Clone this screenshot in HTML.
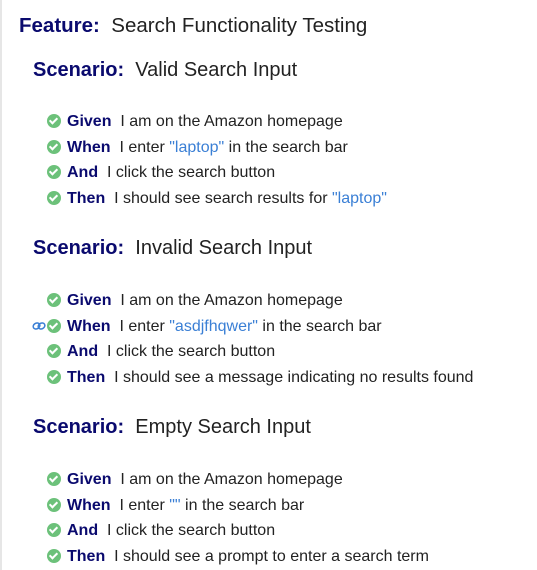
<!DOCTYPE html>
<html><head><meta charset="utf-8"><style>
html,body{margin:0;padding:0;background:#fff;width:537px;height:570px;overflow:hidden;font-family:"Liberation Sans",sans-serif;color:#222;}
.bl{position:absolute;left:0;top:0;width:2px;height:570px;background:#e6e6e6}
.r{position:absolute;white-space:nowrap;line-height:20px}
.f{left:19px;font-size:20.5px;line-height:26px}
.s{left:33px;font-size:20px;line-height:26px}
.k{color:#0a0a6e;font-weight:bold}
.st{left:47px;font-size:16px}
.st .k{margin-left:6px}
.q{color:#3a7fd5}
.ic{display:inline-block;width:14px;height:14px;border-radius:50%;background:#6cc17a;vertical-align:-2px;position:relative}
.ic:after{content:"";position:absolute;left:4px;top:2px;width:3px;height:6px;border:solid #fff;border-width:0 2px 2px 0;transform:rotate(45deg)}
</style></head><body>
<div class="bl"></div>
<div class="r f" style="top:13px"><span class="k">Feature:</span>&nbsp; Search Functionality Testing</div>

<div class="r s" style="top:57px"><span class="k">Scenario:</span>&nbsp; Valid Search Input</div>
<div class="r st" style="top:112px"><span class="ic"></span><span class="k">Given</span>&nbsp; I am on the Amazon homepage</div>
<div class="r st" style="top:138px"><span class="ic"></span><span class="k">When</span>&nbsp; I enter <span class="q">"laptop"</span> in the search bar</div>
<div class="r st" style="top:163px"><span class="ic"></span><span class="k">And</span>&nbsp; I click the search button</div>
<div class="r st" style="top:189px"><span class="ic"></span><span class="k">Then</span>&nbsp; I should see search results for <span class="q">"laptop"</span></div>

<div class="r s" style="top:235px"><span class="k">Scenario:</span>&nbsp; Invalid Search Input</div>
<div class="r st" style="top:291px"><span class="ic"></span><span class="k">Given</span>&nbsp; I am on the Amazon homepage</div>
<svg style="position:absolute;left:32px;top:321px" width="14" height="10" viewBox="0 0 14 10"><g fill="none" stroke="#3a7fd5" stroke-width="1.5"><ellipse cx="4.5" cy="5" rx="3.5" ry="2.8" transform="rotate(-30 4.5 5)"/><ellipse cx="9.5" cy="5" rx="3.5" ry="2.8" transform="rotate(-30 9.5 5)"/></g></svg>
<div class="r st" style="top:317px"><span class="ic"></span><span class="k">When</span>&nbsp; I enter <span class="q">"asdjfhqwer"</span> in the search bar</div>
<div class="r st" style="top:342px"><span class="ic"></span><span class="k">And</span>&nbsp; I click the search button</div>
<div class="r st" style="top:368px"><span class="ic"></span><span class="k">Then</span>&nbsp; I should see a message indicating no results found</div>

<div class="r s" style="top:414px"><span class="k">Scenario:</span>&nbsp; Empty Search Input</div>
<div class="r st" style="top:470px"><span class="ic"></span><span class="k">Given</span>&nbsp; I am on the Amazon homepage</div>
<div class="r st" style="top:496px"><span class="ic"></span><span class="k">When</span>&nbsp; I enter <span class="q">""</span> in the search bar</div>
<div class="r st" style="top:521px"><span class="ic"></span><span class="k">And</span>&nbsp; I click the search button</div>
<div class="r st" style="top:547px"><span class="ic"></span><span class="k">Then</span>&nbsp; I should see a prompt to enter a search term</div>
</body></html>
